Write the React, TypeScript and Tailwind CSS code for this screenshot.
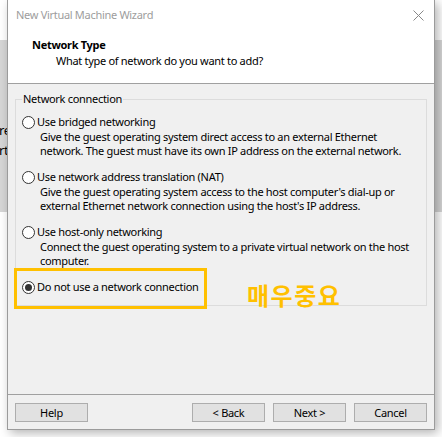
import React from "react";

function Radio({ checked }: { checked?: boolean }) {
  return (
    <span className="w-[13px] h-[13px] rounded-full border border-[#333] bg-white flex items-center justify-center shrink-0">
      {checked && <span className="w-[7px] h-[7px] rounded-full bg-[#333]" />}
    </span>
  );
}

function Option({ label, desc, checked, className = "" }: { label: string; desc?: React.ReactNode; checked?: boolean; className?: string }) {
  return (
    <div className={className}>
      <div className="flex items-center h-[16px] gap-[2px]">
        <Radio checked={checked} />
        <span>{label}</span>
      </div>
      {desc && <div className="pl-[18px] leading-[14px] whitespace-nowrap">{desc}</div>}
    </div>
  );
}

function Button({ children }: { children: React.ReactNode }) {
  return (
    <button className="w-[73px] h-[19px] bg-[#e1e1e1] border border-[#adadad] text-black leading-none flex items-center justify-center">
      {children}
    </button>
  );
}

export default function App() {
  return (
    <div
      className="relative w-[442px] h-[437px] overflow-hidden bg-white text-[11px] tracking-[-0.3px] text-black"
      style={{ fontFamily: '"Noto Sans", "Liberation Sans", sans-serif' }}
    >
      {/* app behind the dialog */}
      <div className="absolute left-0 right-0 top-[40px] h-[172px] bg-[#d6d6d6]" />
      <div className="absolute left-[-1px] top-[122px] leading-[16px] text-[13px]">re</div>
      <div className="absolute left-[-1px] top-[142px] leading-[16px] text-[13px]">rt</div>

      {/* dialog window */}
      <div className="absolute left-[7px] top-0 w-[428px] h-[430px] bg-[#f0f0f0] border border-t-0 border-[#9b9b9b] shadow-[3px_3px_10px_rgba(0,0,0,0.3)] flex flex-col">
        <div className="h-[30px] bg-white flex items-center justify-between pl-[8px] pr-[8px]">
          <span className="text-[#9d9d9d]">New Virtual Machine Wizard</span>
          <svg width="11" height="11" viewBox="0 0 11 11" className="mr-[2px]">
            <path d="M0.5 0.5 L10.5 10.5 M10.5 0.5 L0.5 10.5" stroke="#888" strokeWidth="1" />
          </svg>
        </div>

        <div className="h-[54px] bg-white border-b border-[#a0a0a0] pt-[7px] pl-[24px] leading-[16px]">
          <div className="font-bold">Network Type</div>
          <div className="pl-[24px]">What type of network do you want to add?</div>
        </div>

        <div className="flex-1 px-[7px]">
          <fieldset className="mt-[8px] border border-[#dcdcdc] pl-[6px] pr-[6px] pt-[8px] pb-[10px]">
            <legend className="px-[1px] leading-[14px]">Network connection</legend>
            <Option
              label="Use bridged networking"
              desc={<>Give the guest operating system direct access to an external Ethernet<br />network. The guest must have its own IP address on the external network.</>}
            />
            <Option
              className="mt-[11px]"
              label="Use network address translation (NAT)"
              desc={<>Give the guest operating system access to the host computer's dial-up or<br />external Ethernet network connection using the host's IP address.</>}
            />
            <Option
              className="mt-[11px]"
              label="Use host-only networking"
              desc={<>Connect the guest operating system to a private virtual network on the host<br />computer.</>}
            />
            <Option className="mt-[11px]" label="Do not use a network connection" checked />
          </fieldset>
        </div>

        <div className="h-[35px] border-t border-[#a0a0a0] pt-[8px] px-[7px] flex gap-[8px]">
          <Button>Help</Button>
          <div className="flex-1" />
          <Button>&lt; Back</Button>
          <Button>Next &gt;</Button>
          <Button>Cancel</Button>
        </div>
      </div>

      {/* annotation */}
      <div className="absolute left-[14px] top-[268px] w-[193px] h-[41px] border-[3px] border-[#ffc000]" />
      <div
        className="absolute left-[247px] top-[282px] text-[24px] leading-[26px] tracking-[1.5px] font-bold text-[#ffc000]"
        style={{ fontFamily: '"Noto Sans CJK KR", sans-serif' }}
      >
        매우중요
      </div>
    </div>
  );
}
